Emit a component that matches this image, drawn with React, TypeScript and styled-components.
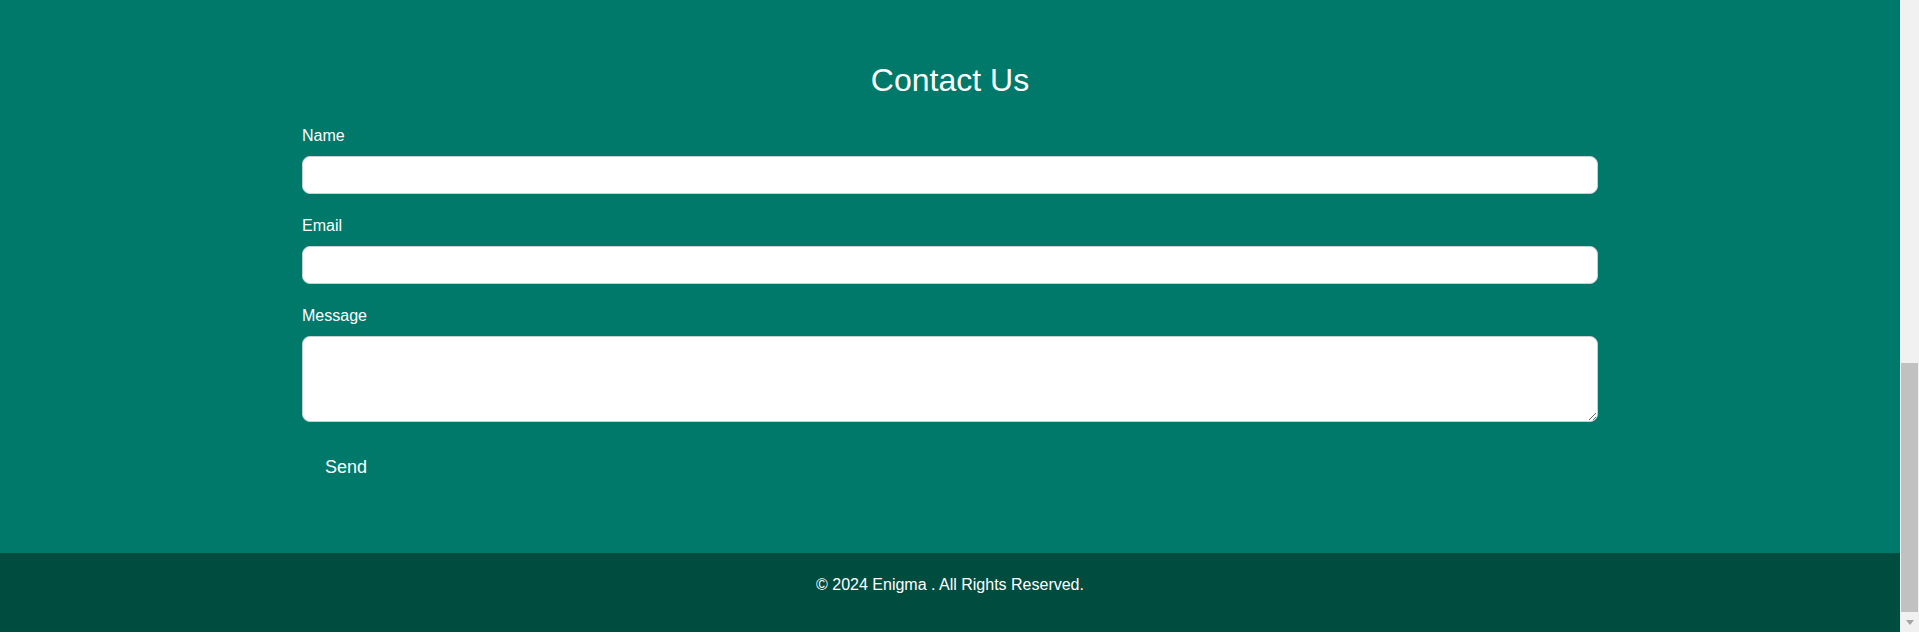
import React from "react";
import styled, { createGlobalStyle } from "styled-components";

const GlobalStyle = createGlobalStyle`
  html, body {
    margin: 0;
    padding: 0;
    overflow: hidden;
  }
  body {
    font-family: "Liberation Sans", Arial, Helvetica, sans-serif;
  }
  * { box-sizing: border-box; }
`;

const Page = styled.div`
  display: flex;
  height: 632px;
  width: 100%;
`;

const Main = styled.div`
  flex: 1;
  display: flex;
  flex-direction: column;
  min-width: 0;
`;

const ContactSection = styled.section`
  flex: 1;
  background: #00796b;
  color: #ffffff;
  padding: 60px 0 66px;
`;

const Title = styled.h2`
  margin: 0 0 27px;
  padding-top: 2px;
  font-size: 32px;
  line-height: 37px;
  font-weight: 400;
  text-align: center;
`;

const Form = styled.form`
  width: 1296px;
  margin: 0 auto;
  display: flex;
  flex-direction: column;
`;

const Field = styled.div`
  display: flex;
  flex-direction: column;
  margin-bottom: ${(p: { $last?: boolean }) => (p.$last ? "24px" : "22px")};
`;

const Label = styled.label`
  font-size: 16px;
  line-height: 18px;
  margin: 1px 0 11px;
`;

const Input = styled.input`
  height: 38px;
  width: 100%;
  border: 1px solid #c9d1d0;
  border-radius: 8px;
  background: #ffffff;
  padding: 0 10px;
  font-family: inherit;
  font-size: 16px;
  outline: none;
`;

const TextArea = styled.textarea`
  height: 86px;
  width: 100%;
  border: 1px solid #c9d1d0;
  border-radius: 8px;
  background: #ffffff;
  padding: 10px;
  font-family: inherit;
  font-size: 16px;
  outline: none;
  display: block;
`;

const SendButton = styled.button`
  align-self: flex-start;
  background: transparent;
  border: none;
  color: #ffffff;
  font-family: inherit;
  font-size: 18px;
  line-height: 21px;
  padding: 11px 23px 9px;
  cursor: pointer;
`;

const Footer = styled.footer`
  background: #004d40;
  color: #ffffff;
  text-align: center;
  padding: 23px 0 38px;
`;

const FooterText = styled.p`
  margin: 0;
  font-size: 16px;
  line-height: 18px;
`;

const ScrollTrack = styled.div`
  width: 19px;
  flex: none;
  background: #f1f1f1;
  display: flex;
  flex-direction: column;
  justify-content: flex-end;
  align-items: center;
`;

const ScrollThumb = styled.div`
  width: 17px;
  height: 249px;
  background: #c1c1c1;
`;

const ArrowBox = styled.div`
  height: 20px;
  width: 19px;
  display: flex;
  align-items: center;
  justify-content: center;
`;

const ArrowDown = styled.div`
  width: 0;
  height: 0;
  border-left: 4.5px solid transparent;
  border-right: 4.5px solid transparent;
  border-top: 5px solid #a3a3a3;
`;

export default function App() {
  return (
    <>
      <GlobalStyle />
      <Page>
        <Main>
          <ContactSection>
            <Title>Contact Us</Title>
            <Form onSubmit={(e) => e.preventDefault()}>
              <Field>
                <Label htmlFor="name">Name</Label>
                <Input id="name" type="text" />
              </Field>
              <Field>
                <Label htmlFor="email">Email</Label>
                <Input id="email" type="email" />
              </Field>
              <Field $last>
                <Label htmlFor="message">Message</Label>
                <TextArea id="message" />
              </Field>
              <SendButton type="submit">Send</SendButton>
            </Form>
          </ContactSection>
          <Footer>
            <FooterText>© 2024 Enigma . All Rights Reserved.</FooterText>
          </Footer>
        </Main>
        <ScrollTrack aria-hidden="true">
          <ScrollThumb />
          <ArrowBox>
            <ArrowDown />
          </ArrowBox>
        </ScrollTrack>
      </Page>
    </>
  );
}
